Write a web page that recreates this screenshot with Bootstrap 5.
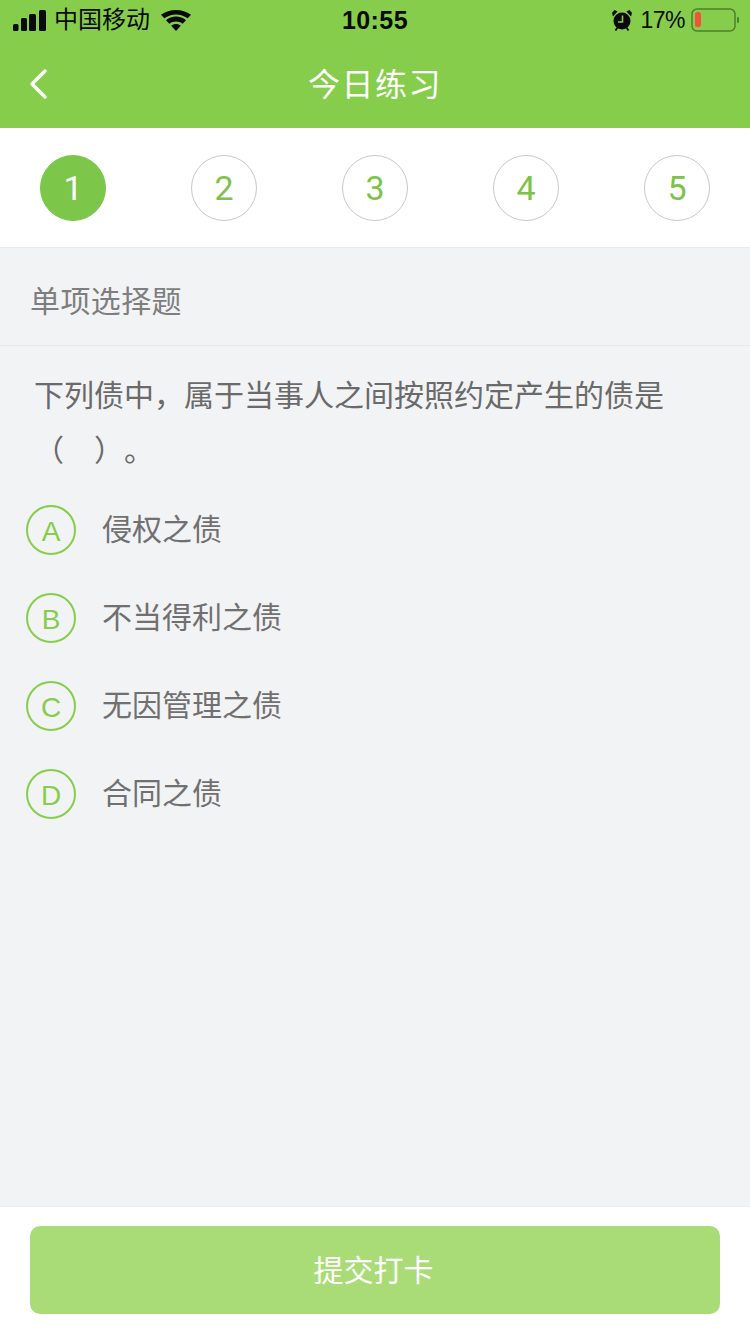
<!DOCTYPE html>
<html lang="zh">
<head>
<meta charset="utf-8">
<title>今日练习</title>
<link rel="stylesheet" href="https://cdn.jsdelivr.net/npm/bootstrap@5.3.0/dist/css/bootstrap.min.css">
<style>
html,body{height:100%;}
body{font-family:"Liberation Sans","Noto Sans CJK SC",sans-serif;background:#f2f3f5;width:750px;height:1334px;overflow:hidden;}
.app-shell{height:1334px;}
.top-area{background:#86cd4b;height:128px;flex:none;}
.status-row{height:40px;padding:0 11px 0 13px;color:#0a0a0a;font-size:24px;line-height:40px;}
.status-left{width:279px;}
.status-right{width:281px;}
.status-time{font-size:25px;font-weight:700;letter-spacing:.4px;}
.carrier{margin-left:8px;}
.wifi-icon{margin-left:11px;}
.battery-pct{font-size:23px;letter-spacing:-.5px;}
.battery-icon{margin-left:6px;}
.title-row{height:88px;color:#fff;position:relative;font-size:32px;letter-spacing:1.500px;}
.title-text{line-height:1;margin-top:2px;}
.back-btn{position:absolute;left:29px;top:28px;line-height:0;}
.steps-bar{height:120px;background:#fff;border-bottom:1px solid #e9eaec;padding:0 40px;flex:none;}
.step-dot{width:66px;height:66px;border-radius:50%;border:1px solid #c9c9c9;color:#7ec24b;font-family:Roboto,"Liberation Sans",sans-serif;font-size:34px;padding-top:2px;}
.step-on{background:#7cc64a;border-color:#7cc64a;color:#fff;}
.type-row{height:98px;padding:10px 0 0 30px;border-bottom:1px solid #e9eaec;color:#7e7e7e;font-size:30px;letter-spacing:.4px;flex:none;}
.q-text{padding:22px 30px 0 34px;color:#6a6a6a;font-size:30px;line-height:55px;text-spacing-trim:space-all;font-feature-settings:"chws" 0;}
.opt-list{padding:7px 0 0 26px;}
.opt-row{height:88px;color:#707070;font-size:30px;}
.opt-mark{width:50px;height:50px;border-radius:50%;border:2px solid #86cd4b;color:#86cd4b;font-size:28px;padding-top:3px;margin:2px 26px 0 0;flex:none;}
.foot-bar{height:128px;background:#fff;border-top:1px solid #e9eaec;padding:19px 30px 0;flex:none;}
.submit-btn{width:100%;height:88px;background:#a9dc77;border:0;border-radius:10px;color:#fff;font-size:30px;padding-right:15px;}
.submit-btn:hover,.submit-btn:focus{background:#a9dc77;color:#fff;}
</style>
</head>
<body>
<div class="app-shell d-flex flex-column">
  <div class="top-area">
    <div class="status-row d-flex align-items-center justify-content-between">
      <div class="status-left d-flex align-items-center">
        <svg width="33" height="21" viewBox="0 0 33 21" fill="#0a0a0a"><rect x="0" y="14" width="5.500" height="7" rx="1.500"/><rect x="8" y="8" width="6" height="13" rx="1.500"/><rect x="16" y="4" width="7" height="17" rx="1.500"/><rect x="26" y="0" width="7" height="21" rx="1.500"/></svg>
        <span class="carrier">中国移动</span>
        <svg class="wifi-icon" width="30" height="21" viewBox="0 0 30 21" fill="#0a0a0a"><path d="M15 21l-4.800-5.200c2.700-2.300 6.900-2.300 9.600 0z"/><path d="M8.300 13.700L5 10.200c5.600-4.800 14.400-4.800 20 0l-3.300 3.500c-3.900-3.100-9.500-3.100-13.400 0z"/><path d="M3.300 8.300L0 4.800C8.500-1.600 21.500-1.600 30 4.800l-3.300 3.500C19.800 3.200 10.200 3.200 3.300 8.300z"/></svg>
      </div>
      <div class="status-time">10:55</div>
      <div class="status-right d-flex align-items-center justify-content-end">
        <svg width="20" height="21" viewBox="0 0 20 21" fill="#0a0a0a" class="me-2"><path d="M1 6.500L5.500 1.500 2.500 0 0 3z"/><path d="M19 6.500L14.500 1.500 17.500 0 20 3z"/><circle cx="10" cy="11" r="8.500"/><path d="M3.500 20.500l2-3M16.500 20.500l-2-3" stroke="#0a0a0a" stroke-width="1.800"/><path d="M10.500 5.500V12H6" stroke="#86cd4b" stroke-width="1.600" fill="none"/></svg>
        <span class="battery-pct">17%</span>
        <svg class="battery-icon" width="48" height="24" viewBox="0 0 48 24"><rect x="1" y="1" width="43" height="22" rx="5" fill="none" stroke="#4d7f2c" stroke-width="1.500"/><rect x="4" y="4" width="6" height="15" rx="2.500" fill="#f0523a"/><rect x="46" y="9" width="2" height="6" rx="1" fill="#4d7f2c"/></svg>
      </div>
    </div>
    <div class="title-row d-flex align-items-center justify-content-center">
      <a class="back-btn" href="#" aria-label="返回"><svg width="20" height="32" viewBox="0 0 20 32" fill="none" stroke="#fff" stroke-width="3.400" stroke-linecap="round" stroke-linejoin="round"><path d="M16 3L3 16l13 13"/></svg></a>
      <div class="title-text">今日练习</div>
    </div>
  </div>
  <div class="steps-bar d-flex align-items-center justify-content-between">
    <div class="step-dot step-on d-flex align-items-center justify-content-center">1</div>
    <div class="step-dot d-flex align-items-center justify-content-center">2</div>
    <div class="step-dot d-flex align-items-center justify-content-center">3</div>
    <div class="step-dot d-flex align-items-center justify-content-center">4</div>
    <div class="step-dot d-flex align-items-center justify-content-center">5</div>
  </div>
  <div class="type-row d-flex align-items-center">单项选择题</div>
  <div class="flex-grow-1">
    <div class="q-text">下列债中，属于当事人之间按照约定产生的债是<br>（　）。</div>
    <div class="opt-list">
      <div class="opt-row d-flex align-items-center"><span class="opt-mark d-flex align-items-center justify-content-center">A</span>侵权之债</div>
      <div class="opt-row d-flex align-items-center"><span class="opt-mark d-flex align-items-center justify-content-center">B</span>不当得利之债</div>
      <div class="opt-row d-flex align-items-center"><span class="opt-mark d-flex align-items-center justify-content-center">C</span>无因管理之债</div>
      <div class="opt-row d-flex align-items-center"><span class="opt-mark d-flex align-items-center justify-content-center">D</span>合同之债</div>
    </div>
  </div>
  <div class="foot-bar"><button type="button" class="btn submit-btn">提交打卡</button></div>
</div>
<script src="https://cdn.jsdelivr.net/npm/bootstrap@5.3.0/dist/js/bootstrap.bundle.min.js"></script>
</body>
</html>
